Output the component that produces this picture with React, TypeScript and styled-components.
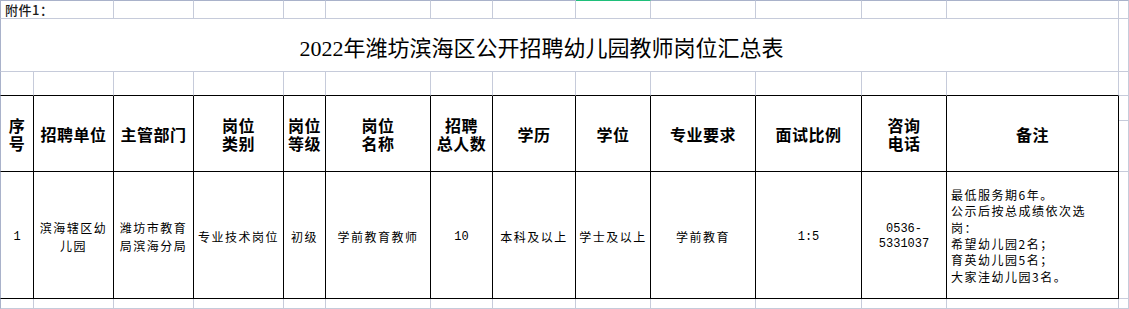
import React from 'react';
import styled, { createGlobalStyle } from 'styled-components';

const GRID = '#c6cbda';
const EDGE = '#a9b2ca';
const INK = '#000000';
const PICK = '#1fbf7a';

const COLS = [34, 80, 80, 90, 42, 105, 62, 83, 75, 105, 106, 85, 172];

const GlobalStyle = createGlobalStyle`
    html, body {
        margin: 0;
        padding: 0;
        background: #ffffff;
        overflow: hidden;
    }
`;

const Sheet = styled.div`
    display: grid;
    grid-template-columns: ${COLS.map((w) => `${w}px`).join(' ')} 1fr;
    grid-template-rows: 19px 53px 24px 25px 51px 127px 10px;
    width: 1129px;
    height: 309px;
    font-family: 'Noto Sans CJK SC', sans-serif;
    color: #000;
`;

type CellProps = {
    $span?: number;
    $rows?: number;
    $right?: string;
    $bottom?: string;
    $top?: string;
    $left?: string;
};

const Cell = styled.div<CellProps>`
    box-sizing: border-box;
    grid-column: span ${(p) => p.$span ?? 1};
    grid-row: span ${(p) => p.$rows ?? 1};
    border-right: 1px solid ${(p) => p.$right ?? GRID};
    border-bottom: 1px solid ${(p) => p.$bottom ?? GRID};
    border-top: ${(p) => (p.$top ? `1px solid ${p.$top}` : 'none')};
    border-left: ${(p) => (p.$left ? `1px solid ${p.$left}` : 'none')};
    display: flex;
    align-items: center;
    justify-content: center;
    text-align: center;
    min-width: 0;
    white-space: nowrap;
`;

const NoteLabel = styled(Cell)`
    justify-content: flex-start;
    padding-left: 4px;
    font-size: 13px;
    font-weight: 500;
    letter-spacing: 0.5px;
    color: #1c1c1c;
    overflow: visible;
`;

const TitleCell = styled(Cell)`
    padding-right: 36px;
    font-family: 'Liberation Serif', 'Noto Sans CJK SC', serif;
    font-size: 22px;
    padding-top: 2px;
`;

const HeadCell = styled(Cell)`
    font-size: 16px;
    font-weight: 700;
    line-height: 18px;
    letter-spacing: 0.5px;
`;

const DataCell = styled(Cell)`
    font-size: 12px;
    line-height: 18px;
    letter-spacing: 1.5px;
    padding-top: 4px;
`;

const NumCell = styled(DataCell)`
    font-family: 'Liberation Mono', monospace;
    letter-spacing: 0;
    line-height: 15px;
`;

const NoteCell = styled(Cell)`
    justify-content: flex-start;
    text-align: left;
    padding: 2px 0 0 4px;
    font-size: 12px;
    line-height: 16.4px;
    letter-spacing: 1.5px;
`;

const Lines: React.FC<{ text: string }> = ({ text }) => (
    <div>
        {text.split('\n').map((line, i) => (
            <div key={i}>{line}</div>
        ))}
    </div>
);

const headers = [
    '序\n号',
    '招聘单位',
    '主管部门',
    '岗位\n类别',
    '岗位\n等级',
    '岗位\n名称',
    '招聘\n总人数',
    '学历',
    '学位',
    '专业要求',
    '面试比例',
    '咨询\n电话',
    '备注',
];

const rowData = [
    '1',
    '滨海辖区幼\n儿园',
    '潍坊市教育\n局滨海分局',
    '专业技术岗位',
    '初级',
    '学前教育教师',
    '10',
    '本科及以上',
    '学士及以上',
    '学前教育',
    '1:5',
    '0536-\n5331037',
];

const numeric = new Set([0, 6, 10, 11]);

const note = '最低服务期6年。\n公示后按总成绩依次选\n岗：\n希望幼儿园2名；\n育英幼儿园5名；\n大家洼幼儿园3名。';

export default function App() {
    const edge = (i: number) => (i === 0 ? EDGE : undefined);

    return (
        <>
            <GlobalStyle />
            <Sheet>
                {/* row 1 */}
                <NoteLabel $span={2} $top={EDGE} $left={EDGE}>
                    附件1：
                </NoteLabel>
                {COLS.slice(2).map((_, i) => (
                    <Cell key={`r1-${i}`} $top={i + 2 === 8 ? PICK : EDGE} />
                ))}
                <Cell $top={EDGE} />

                {/* row 2: title */}
                <TitleCell $span={13} $left={EDGE}>
                    2022年潍坊滨海区公开招聘幼儿园教师岗位汇总表
                </TitleCell>
                <Cell />

                {/* row 3 */}
                {COLS.map((_, i) => (
                    <Cell key={`r3-${i}`} $bottom={INK} $left={edge(i)} />
                ))}
                <Cell />

                {/* header */}
                {headers.map((h, i) => (
                    <HeadCell key={`h-${i}`} $rows={2} $right={INK} $bottom={INK} $left={edge(i)}>
                        <Lines text={h} />
                    </HeadCell>
                ))}
                <Cell />
                <Cell />

                {/* data */}
                {rowData.map((d, i) =>
                    numeric.has(i) ? (
                        <NumCell key={`d-${i}`} $right={INK} $bottom={INK} $left={edge(i)}>
                            <Lines text={d} />
                        </NumCell>
                    ) : (
                        <DataCell key={`d-${i}`} $right={INK} $bottom={INK}>
                            <Lines text={d} />
                        </DataCell>
                    ),
                )}
                <NoteCell $right={INK} $bottom={INK}>
                    <Lines text={note} />
                </NoteCell>
                <Cell />

                {/* trailing row */}
                {COLS.map((_, i) => (
                    <Cell key={`r7-${i}`} $left={edge(i)} />
                ))}
                <Cell />
            </Sheet>
        </>
    );
}
